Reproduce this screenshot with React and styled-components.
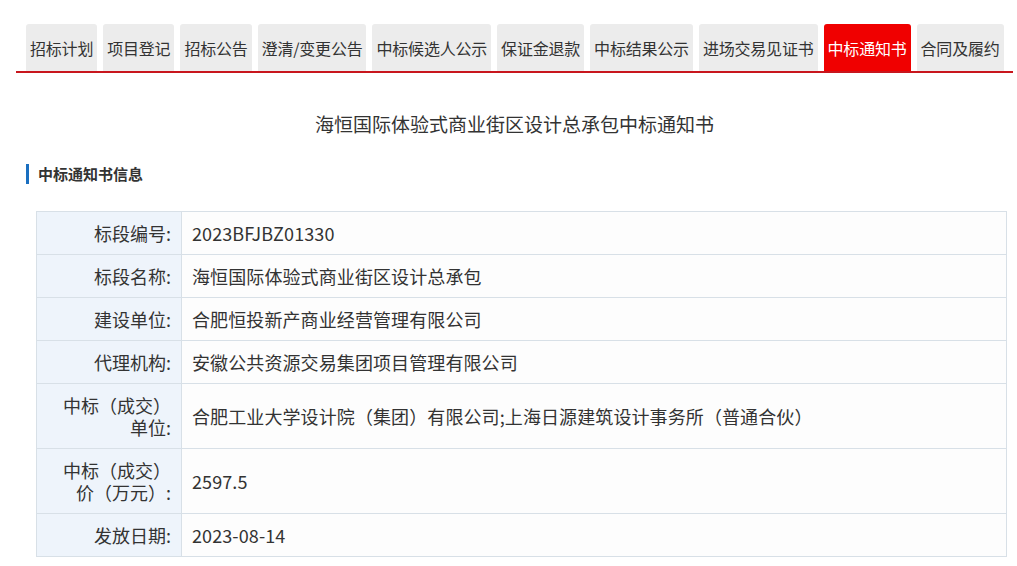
import React from "react";
import styled, { createGlobalStyle } from "styled-components";

const GlobalStyle = createGlobalStyle`
  body {
    margin: 0;
    background: #fff;
    font-family: "Microsoft YaHei", "Noto Sans CJK SC", "Noto Sans", sans-serif;
    color: #333;
  }
`;

const Page = styled.div`
  width: 997px;
  padding: 24px 0 0 16px;
`;

const TabBar = styled.ul`
  display: flex;
  gap: 6px;
  margin: 0;
  padding: 0 0 0 10px;
  list-style: none;
  border-bottom: 2px solid #c8161d;
`;

const Tab = styled.li`
  height: 47px;
  padding: 0 4px;
  display: flex;
  align-items: center;
  font-size: 16px;
  letter-spacing: -0.2px;
  border-radius: 3px 3px 0 0;
  background: ${(props) => (props.active ? "#f00000" : "#ececec")};
  color: ${(props) => (props.active ? "#fff" : "#333")};
  white-space: nowrap;
`;

const Title = styled.h2`
  margin: 0;
  padding-top: 38px;
  height: 26px;
  line-height: 26px;
  text-align: center;
  font-size: 19px;
  font-weight: normal;
  color: #333;
`;

const SectionHead = styled.h3`
  margin: 27px 0 0 10px;
  padding-left: 9px;
  height: 20px;
  line-height: 20px;
  border-left: 3px solid #1a6fc0;
  font-size: 15px;
  font-weight: bold;
  color: #333;
`;

const InfoTable = styled.table`
  margin: 27px 0 0 20px;
  width: 971px;
  border-collapse: collapse;
  font-size: 18px;
  line-height: 22px;
`;

const Label = styled.th`
  width: 124px;
  padding: 10px;
  border: 1px solid #d8e0e7;
  background: #eef4fb;
  text-align: right;
  font-weight: normal;
  color: #333;
`;

const Value = styled.td`
  padding: 10px;
  border: 1px solid #d8e0e7;
  background: #fdfdfd;
  color: #333;
  letter-spacing: 0.1px;
`;

const tabs = [
  "招标计划",
  "项目登记",
  "招标公告",
  "澄清/变更公告",
  "中标候选人公示",
  "保证金退款",
  "中标结果公示",
  "进场交易见证书",
  "中标通知书",
  "合同及履约",
];

const rows = [
  ["标段编号:", "2023BFJBZ01330"],
  ["标段名称:", "海恒国际体验式商业街区设计总承包"],
  ["建设单位:", "合肥恒投新产商业经营管理有限公司"],
  ["代理机构:", "安徽公共资源交易集团项目管理有限公司"],
  ["中标（成交）单位:", "合肥工业大学设计院（集团）有限公司;上海日源建筑设计事务所（普通合伙）"],
  ["中标（成交）价（万元）:", "2597.5"],
  ["发放日期:", "2023-08-14"],
];

export default function App() {
  return (
    <>
      <GlobalStyle />
      <Page>
        <TabBar>
          {tabs.map((t) => (
            <Tab key={t} active={t === "中标通知书"}>
              {t}
            </Tab>
          ))}
        </TabBar>
        <Title>海恒国际体验式商业街区设计总承包中标通知书</Title>
        <SectionHead>中标通知书信息</SectionHead>
        <InfoTable>
          <tbody>
            {rows.map(([label, value]) => (
              <tr key={label}>
                <Label>{label}</Label>
                <Value>{value}</Value>
              </tr>
            ))}
          </tbody>
        </InfoTable>
      </Page>
    </>
  );
}
